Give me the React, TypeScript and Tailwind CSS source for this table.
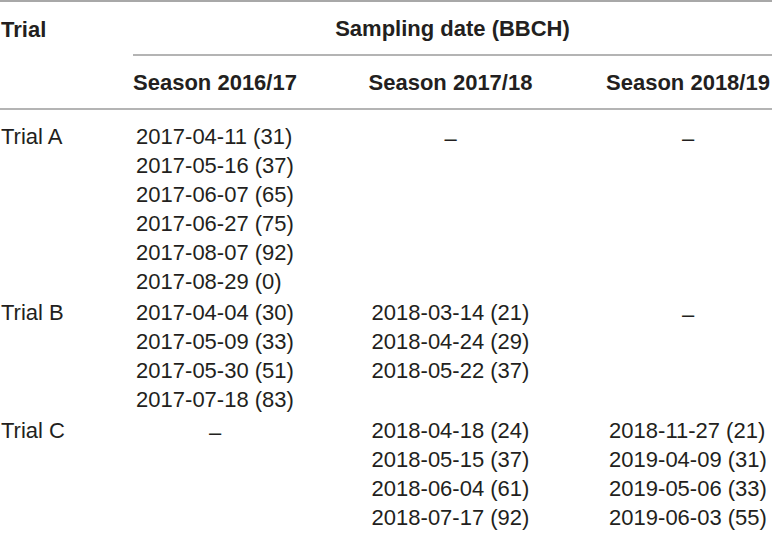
const groups = [
  {
    trial: 'Trial A',
    seasons: [
      [
        '2017-04-11 (31)',
        '2017-05-16 (37)',
        '2017-06-07 (65)',
        '2017-06-27 (75)',
        '2017-08-07 (92)',
        '2017-08-29 (0)',
      ],
      ['–'],
      ['–'],
    ],
  },
  {
    trial: 'Trial B',
    seasons: [
      ['2017-04-04 (30)', '2017-05-09 (33)', '2017-05-30 (51)', '2017-07-18 (83)'],
      ['2018-03-14 (21)', '2018-04-24 (29)', '2018-05-22 (37)'],
      ['–'],
    ],
  },
  {
    trial: 'Trial C',
    seasons: [
      ['–'],
      ['2018-04-18 (24)', '2018-05-15 (37)', '2018-06-04 (61)', '2018-07-17 (92)'],
      ['2018-11-27 (21)', '2019-04-09 (31)', '2019-05-06 (33)', '2019-06-03 (55)'],
    ],
  },
]

const cols = 'grid grid-cols-[133px_164px_307px_168px]'

export default function App() {
  return (
    <div className="w-[772px] h-[540px] bg-white text-[#231f20] text-[22px] font-['Liberation_Sans',Arial,sans-serif] overflow-hidden">
      <div className="border-t-2 border-[#a8a8a8]">
        {/* header */}
        <div className={`${cols} border-b-2 border-[#b4b4b4] font-bold`}>
          <div className="row-span-2 h-[54px] flex items-center pl-px">Trial</div>
          <div className="col-span-3 h-[54px] flex items-center justify-center border-b-2 border-[#b4b4b4]">
            Sampling date (BBCH)
          </div>
          <div className="h-[52px] flex items-center justify-center">Season 2016/17</div>
          <div className="h-[52px] flex items-center justify-center">Season 2017/18</div>
          <div className="h-[52px] flex items-center justify-center">Season 2018/19</div>
        </div>

        {/* body */}
        <div className="pt-[12px]">
          {groups.map(g => (
            <div key={g.trial} className={cols}>
              <div className="leading-[29px] pl-px">{g.trial}</div>
              {g.seasons.map((lines, i) => (
                <div key={i} className="text-center">
                  <div className="inline-block text-left">
                    {lines.map(l => (
                      <div key={l} className="leading-[29px] whitespace-nowrap">
                        {l}
                      </div>
                    ))}
                  </div>
                </div>
              ))}
            </div>
          ))}
        </div>
      </div>
    </div>
  )
}
